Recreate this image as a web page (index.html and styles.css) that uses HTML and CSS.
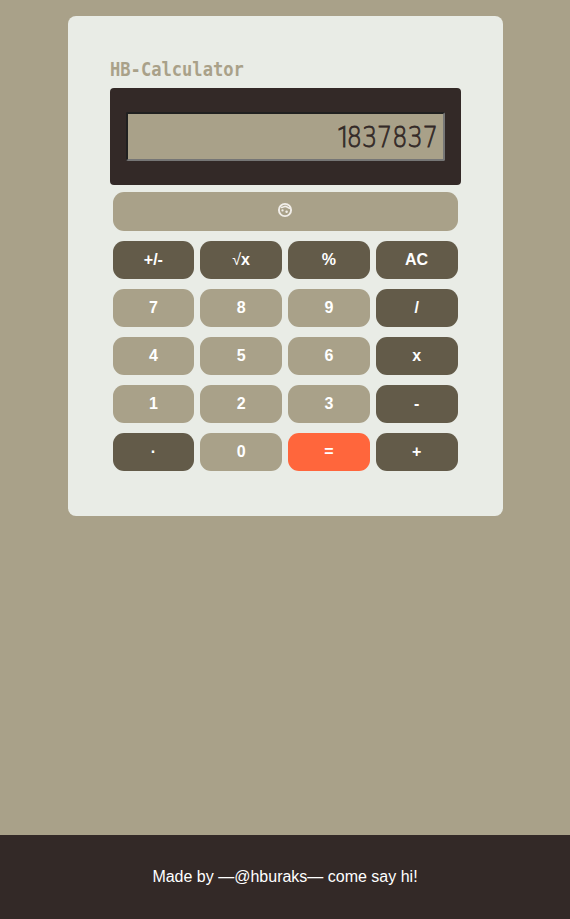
FILE: index.html
```html
<!DOCTYPE html>
<html lang="en">
<head>
<meta charset="utf-8">
<title>HB-Calculator</title>
<link rel="stylesheet" href="styles.css">
</head>
<body>
<main class="calculator">
  <h1 class="title">HB-Calculator</h1>
  <div class="display"><div class="screen"><span class="digits"><span class="one">1</span>837837</span></div></div>
  <div class="keys">
    <button class="key wide" aria-label="Theme">
      <svg class="face" viewBox="0 0 16 16" fill="none" stroke="currentColor">
        <circle cx="8" cy="8" r="6.1" stroke-width="1.9"/>
        <path d="M4 5.3C6 5.9 6.8 4.2 8.5 4.4C10.2 4.5 10.5 6 13.2 6.4" stroke-width="1.6"/>
        <circle cx="5.5" cy="8.4" r="1.15" fill="currentColor" stroke="none"/>
        <circle cx="9.6" cy="9.8" r="1.25" fill="currentColor" stroke="none"/>
      </svg>
    </button>
    <button class="key dark">+/-</button><button class="key dark"><span class="root">√</span>x</button><button class="key dark">%</button><button class="key dark">AC</button>
    <button class="key">7</button><button class="key">8</button><button class="key">9</button><button class="key dark">/</button>
    <button class="key">4</button><button class="key">5</button><button class="key">6</button><button class="key dark">x</button>
    <button class="key">1</button><button class="key">2</button><button class="key">3</button><button class="key dark">-</button>
    <button class="key dark">·</button><button class="key">0</button><button class="key equals">=</button><button class="key dark">+</button>
  </div>
</main>
<footer class="footer">Made by —@hburaks— come say hi!</footer>
</body>
</html>
```
FILE: styles.css
```css
* { box-sizing: border-box; }
body {
  margin: 0;
  min-height: 100vh;
  display: flex;
  flex-direction: column;
  align-items: center;
  background: #a9a189;
  font-family: "Liberation Sans", Arial, sans-serif;
}
.calculator {
  width: 435px;
  height: 500px;
  margin-top: 16px;
  padding: 40px 42px;
  border-radius: 8px;
  background: #e9ece6;
}
.title {
  margin: 0;
  width: max-content;
  height: 32px;
  font: bold 19px/26px "DejaVu Sans Mono", monospace;
  color: #a9a189;
  transform: scaleX(.9);
  transform-origin: left;
}
.display {
  height: 97px;
  padding: 24px 16px;
  border-radius: 4px;
  background: #332927;
}
.screen {
  display: flex;
  justify-content: flex-end;
  align-items: center;
  height: 49px;
  padding-right: 5px;
  border: 2px solid;
  border-color: #202020 #767676 #767676 #202020;
  border-radius: 2px;
  background: #a9a189;
}
.digits {
  display: block;
  padding-top: 1px;
  font: 200 28.8px/45px "DejaVu Sans", sans-serif;
  color: #332927;
  -webkit-text-stroke: .8px #332927;
  transform: scaleX(.83);
  transform-origin: right;
}
.one {
  font-family: Roboto, sans-serif;
  font-weight: 300;
  letter-spacing: -4px;
}
.keys {
  display: grid;
  grid-template-columns: repeat(4, 1fr);
  grid-template-rows: 39px repeat(5, 38px);
  gap: 10px 6px;
  padding: 7px 3px 0;
}
.key {
  display: flex;
  align-items: center;
  justify-content: center;
  padding: 0;
  border: 0;
  border-radius: 11px;
  background: #a9a189;
  color: #fff;
  font: bold 16px/18px "Liberation Sans", Arial, sans-serif;
}
.wide { grid-column: 1 / -1; }
.dark { background: #635b49; }
.equals { background: #ff663c; }
.root { font-weight: normal; }
.face { width: 16px; height: 16px; color: #f1eee9; margin-top: -3px; }
.footer {
  width: 100%;
  height: 84px;
  margin-top: auto;
  background: #332927;
  color: #fff;
  font-size: 16px;
  line-height: 84px;
  text-align: center;
}
```
